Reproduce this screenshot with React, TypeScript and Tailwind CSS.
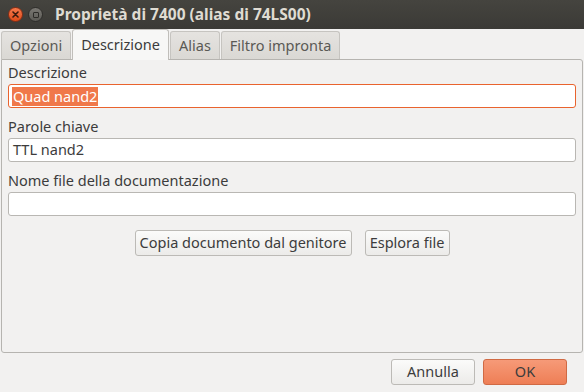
import React from "react";

const tabs = ["Opzioni", "Descrizione", "Alias", "Filtro impronta"];

function Field({ label, value, focused }: { label: string; value?: string; focused?: boolean }) {
  return (
    <div className="flex flex-col">
      <div className="h-[19px] leading-[19px] text-[#3c3c3c]">{label}</div>
      <div
        className={`mt-[2px] flex h-[24px] items-center rounded-[3px] border bg-white px-[3px] ${
          focused ? "border-[#e9632e]" : "border-[#b9b7b3]"
        }`}
      >
        {value && focused ? (
          <span className="bg-[#f0784a] px-[1px] leading-[19px] text-white">{value}</span>
        ) : (
          <span className="px-[1px] text-[#3c3c3c]">{value}</span>
        )}
      </div>
    </div>
  );
}

function Btn({ children, primary, className = "" }: { children: React.ReactNode; primary?: boolean; className?: string }) {
  return (
    <button
      type="button"
      className={`flex h-[26px] items-center justify-center whitespace-nowrap rounded-[3px] border px-0 ${
        primary
          ? "border-[#d06a44] bg-gradient-to-b from-[#f69a78] to-[#ee7e55] text-[#3c3c3c]"
          : "border-[#bcbab6] bg-gradient-to-b from-[#fbfbfa] to-[#ecebe9] text-[#3c3c3c]"
      } ${className}`}
    >
      {children}
    </button>
  );
}

export default function App() {
  return (
    <div
      className="flex h-[392px] w-[584px] flex-col overflow-hidden bg-[#f2f1f0] text-[14.5px] text-[#3c3c3c]"
      style={{ fontFamily: '"Noto Sans", "Open Sans", sans-serif' }}
    >
      {/* title bar */}
      <div className="flex h-[29px] items-center bg-gradient-to-b from-[#45443f] to-[#3b3a36] pl-[8px]">
        <div className="flex h-[15px] w-[15px] items-center justify-center rounded-full border border-[#8a2e14] bg-gradient-to-b from-[#f6784a] to-[#df4b16]">
          <svg width="7" height="7" viewBox="0 0 7 7">
            <path d="M1 1L6 6M6 1L1 6" stroke="#3a1a0e" strokeWidth="1.6" strokeLinecap="round" />
          </svg>
        </div>
        <div className="ml-[5px] flex h-[15px] w-[15px] items-center justify-center rounded-full border border-[#2f2e2b] bg-gradient-to-b from-[#7a7873] to-[#5c5b56]">
          <div className="h-[6px] w-[6px] rounded-[1px] border border-[#2d2c29]" />
        </div>
        <div className="ml-[12px] text-[15.5px] font-bold text-[#dfdbd2]">Proprietà di 7400 (alias di 74LS00)</div>
      </div>

      {/* tabs */}
      <div className="flex h-[30px] items-end pl-[1px]">
        {tabs.map((t) => {
          const active = t === "Descrizione";
          return (
            <div
              key={t}
              className={`relative mr-[1px] flex items-center rounded-t-[3px] border border-b-0 px-[8px] ${
                active
                  ? "z-10 -mb-[1px] h-[31px] border-[#c0beba] bg-[#f7f7f6] text-[#3c3c3c]"
                  : "h-[28px] border-[#c6c4c0] bg-gradient-to-b from-[#e5e3e0] to-[#dad8d4] text-[#5a5955]"
              }`}
            >
              {t}
            </div>
          );
        })}
      </div>

      {/* page */}
      <div className="mx-[1px] flex h-[294px] flex-col rounded-b-[3px] rounded-tr-[3px] border border-[#b6b4b0] bg-[#f2f1f0] px-[6px] pt-[3px]">
        <div className="flex flex-col gap-[9px]">
          <Field label="Descrizione" value="Quad nand2" focused />
          <Field label="Parole chiave" value="TTL nand2" />
          <Field label="Nome file della documentazione" value="" />
        </div>
        <div className="mt-[14px] flex justify-center gap-[13px]">
          <Btn className="w-[217px]">Copia documento dal genitore</Btn>
          <Btn className="w-[85px]">Esplora file</Btn>
        </div>
      </div>

      {/* footer */}
      <div className="mt-[6px] flex justify-end gap-[8px] pr-[17px]">
        <Btn className="w-[84px]">Annulla</Btn>
        <Btn primary className="w-[84px]">
          OK
        </Btn>
      </div>
    </div>
  );
}
